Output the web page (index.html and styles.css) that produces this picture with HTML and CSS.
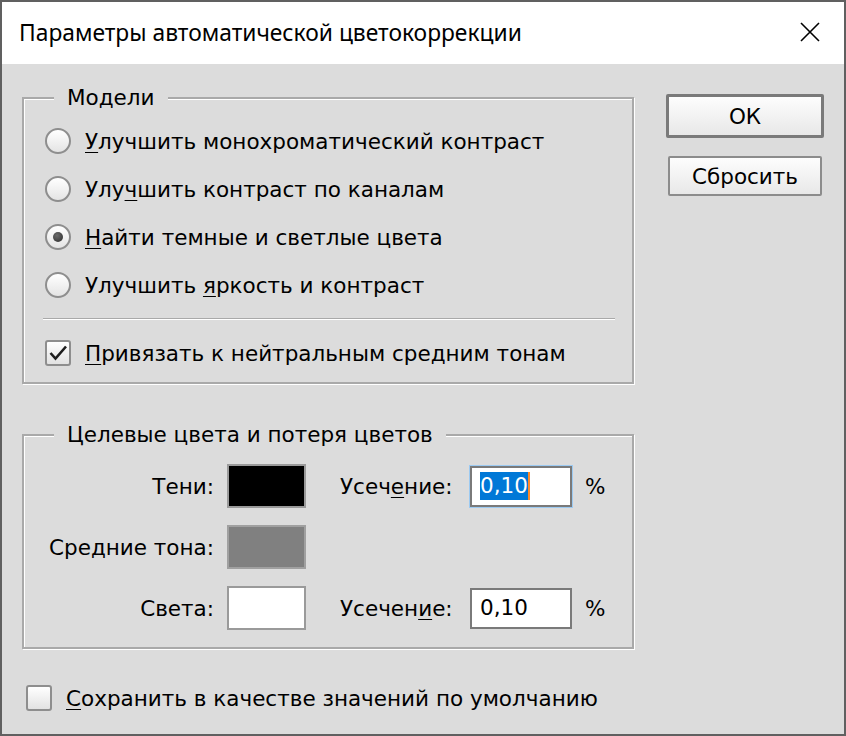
FILE: index.html
```html
<!DOCTYPE html>
<html lang="ru">
<head>
<meta charset="utf-8">
<title>Параметры автоматической цветокоррекции</title>
<link rel="stylesheet" href="styles.css">
</head>
<body>
<div class="window">
  <div class="titlebar">
    <span class="title">Параметры автоматической цветокоррекции</span>
    <svg class="close" width="22" height="22" viewBox="0 0 22 22"><path d="M2 2 L20 20 M20 2 L2 20" stroke="#000" stroke-width="1.6" fill="none"/></svg>
  </div>
  <div class="content">
    <div class="main">
      <div class="left">
        <fieldset class="group g1">
          <legend class="legend l1">Модели</legend>
          <div class="row"><span class="radio"></span><span><u>У</u>лучшить монохроматический контраст</span></div>
          <div class="row"><span class="radio"></span><span>Улу<u>ч</u>шить контраст по каналам</span></div>
          <div class="row"><span class="radio on"><span class="dot"></span></span><span><u>Н</u>айти темные и светлые цвета</span></div>
          <div class="row"><span class="radio"></span><span>Улучшить <u>я</u>ркость и контраст</span></div>
          <div class="sep"></div>
          <div class="row"><span class="check"><svg width="26" height="26" viewBox="0 0 26 26"><path d="M5.5 13 L10.5 18.5 L21 6.5" stroke="#1e1e1e" stroke-width="2.6" fill="none"/></svg></span><span><u>П</u>ривязать к нейтральным средним тонам</span></div>
        </fieldset>
        <fieldset class="group g2">
          <legend class="legend l2">Целевые цвета и потеря цветов</legend>
          <div class="grid">
            <span class="lbl">Тени:</span>
            <span class="swatch black"></span>
            <span class="lbl2">Усеч<u>е</u>ние:</span>
            <span class="field focused"><span class="sel">0,10</span><span class="caret"></span></span>
            <span class="pct">%</span>

            <span class="lbl">Средние тона:</span>
            <span class="swatch mid"></span>
            <span></span><span></span><span></span>

            <span class="lbl">Света:</span>
            <span class="swatch white"></span>
            <span class="lbl2">Усечен<u>и</u>е:</span>
            <span class="field">0,10</span>
            <span class="pct">%</span>
          </div>
        </fieldset>
      </div>
      <div class="buttons">
        <div class="btn default">ОК</div>
        <div class="btn reset">Сбросить</div>
      </div>
    </div>
    <div class="row bottom"><span class="check"></span><span><u>С</u>охранить в качестве значений по умолчанию</span></div>
  </div>
</div>
</body>
</html>
```
FILE: styles.css
```css
html, body {
  margin: 0;
  padding: 0;
}
body {
  width: 846px;
  height: 736px;
  overflow: hidden;
  font-family: "DejaVu Sans", sans-serif;
  font-size: 21.5px;
  color: #000;
}
.window {
  box-sizing: border-box;
  width: 846px;
  height: 736px;
  border: 2px solid #606060;
  background: #dcdcdc;
  display: flex;
  flex-direction: column;
}
.titlebar {
  height: 60px;
  background: #fff;
  display: flex;
  align-items: center;
  justify-content: space-between;
  padding: 0 23px 2px 17px;
  flex: none;
}
.title {
  font-family: "Noto Sans", "Open Sans", sans-serif;
  font-size: 22.8px;
  color: #000;
}
.close {
  display: block;
}
.content {
  padding: 22px 20px 0 20px;
}
.main {
  display: flex;
  gap: 32px;
}
.left {
  width: 612px;
  flex: none;
}
.group {
  margin: 0;
  border: 2px solid #a9a9a9;
  box-shadow: inset 1px 1px 0 #fff, 1px 1px 0 #fff;
  min-width: 0;
}
.legend {
  padding: 0 13px;
  line-height: 24px;
  background: #dcdcdc;
}
.g1 {
  padding: 7px 17px 5px 21px;
}
.l1 {
  margin-left: 9px;
}
.g2 {
  margin-top: 39px;
  padding: 17px 10px 17px 0;
}
.l2 {
  margin-left: 30px;
}
.row {
  height: 48px;
  display: flex;
  align-items: center;
  gap: 14px;
  white-space: nowrap;
}
u {
  text-decoration-thickness: 1px;
  text-underline-offset: 3px;
}
.radio {
  box-sizing: border-box;
  width: 26px;
  height: 26px;
  border-radius: 50%;
  border: 2px solid #8e8e8e;
  background: linear-gradient(#ffffff, #e4e4e4);
  display: flex;
  align-items: center;
  justify-content: center;
  flex: none;
}
.dot {
  width: 10px;
  height: 10px;
  border-radius: 50%;
  background: radial-gradient(circle at 40% 35%, #6a6a6a, #2a2a2a);
}
.check {
  box-sizing: border-box;
  width: 26px;
  height: 26px;
  border: 2px solid #8e8e8e;
  border-radius: 3px;
  background: linear-gradient(#ffffff, #e2e2e2);
  flex: none;
  position: relative;
}
.check svg {
  position: absolute;
  left: -2px;
  top: -2px;
}
.sep {
  height: 1px;
  background: #a9a9a9;
  border-bottom: 1px solid #fff;
  margin: 9px 0 9px -2px;
}
.grid {
  display: grid;
  grid-template-columns: 203px 79px 164px 102px auto;
  grid-auto-rows: 44px;
  row-gap: 17px;
  align-items: center;
}
.lbl {
  text-align: right;
  padding-right: 13px;
  white-space: nowrap;
}
.lbl2 {
  padding-left: 34px;
  white-space: nowrap;
}
.swatch {
  box-sizing: border-box;
  height: 44px;
  border: 2px solid #9a9a9a;
}
.swatch.black { background: #000; }
.swatch.mid { background: #808080; border-color: #a0a0a0; }
.swatch.white { background: #fff; }
.field {
  box-sizing: border-box;
  height: 41px;
  border: 2px solid #7a7a7a;
  background: #fff;
  padding-left: 8px;
  display: flex;
  align-items: center;
  line-height: 28px;
}
.field.focused {
  outline: 1px solid #9ccaf2;
}
.sel {
  background: #0078d7;
  color: #fff;
  height: 28px;
}
.caret {
  width: 2px;
  height: 28px;
  background: #ff8a2a;
}
.pct {
  padding-left: 13px;
}
.buttons {
  display: flex;
  flex-direction: column;
  align-items: flex-start;
  padding-top: 8px;
}
.btn {
  box-sizing: border-box;
  background: linear-gradient(#fdfdfd, #e8e8e8);
  display: flex;
  align-items: center;
  justify-content: center;
  border-radius: 2px;
}
.btn.default {
  width: 158px;
  height: 44px;
  border: 3px solid #7a7a7a;
}
.btn.reset {
  width: 154px;
  height: 40px;
  margin: 18px 0 0 2px;
  border: 2px solid #8c8c8c;
}
.bottom {
  margin: 25px 0 0 4px;
}
```
